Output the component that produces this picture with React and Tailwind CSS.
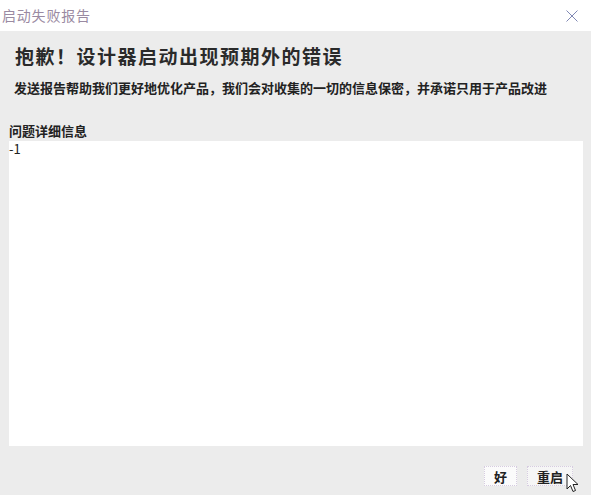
const cjk = { fontFamily: '"Noto Sans CJK SC", "Noto Sans", sans-serif' };

const Cursor = () => (
  <svg width="14" height="20" viewBox="0 0 14 20" className="absolute left-[566px] top-[473px]">
    <path
      d="M1 1 L1 16 L4.5 12.5 L7 18.5 L9.5 17.5 L7 11.5 L12 11.5 Z"
      fill="#fff"
      stroke="#222"
      strokeWidth="1"
      strokeLinejoin="round"
    />
  </svg>
);

export default function App() {
  return (
    <div className="relative w-[591px] h-[495px] flex flex-col bg-[#ececec] overflow-hidden" style={cjk}>
      <div className="h-[31px] bg-white flex items-center justify-between pl-[2px] pr-[13px]">
        <span className="text-[14px] tracking-[0.8px] text-[#9a8aa2]">启动失败报告</span>
        <svg width="12" height="12" viewBox="0 0 12 12">
          <path d="M0.5 0.5 L11.5 11.5 M11.5 0.5 L0.5 11.5" stroke="#8088b4" strokeWidth="1" />
        </svg>
      </div>

      <div className="flex-1 flex flex-col">
        <h1 className="pt-[11px] pl-[15px] text-[19px] leading-[28px] tracking-[1.5px] font-semibold text-[#2a2a2a]">
          抱歉！设计器启动出现预期外的错误
        </h1>
        <p className="mt-[9px] pl-[14px] text-[13px] leading-[18px] font-bold text-[#222]">
          发送报告帮助我们更好地优化产品，我们会对收集的一切的信息保密，并承诺只用于产品改进
        </p>
        <div className="mt-[25px] pl-[9px] text-[13px] leading-[18px] font-bold text-[#222]">问题详细信息</div>
        <div className="mt-[1px] ml-[9px] w-[574px] h-[305px] bg-white text-[13px] leading-[16px] text-[#222]">
          -1
        </div>
        <div className="mt-[20px] flex justify-end gap-[10px] pr-[18px]">
          <button className="w-[33px] h-[20px] bg-[#fbfbfb] border border-dotted border-[#d6cce0] text-[13px] font-bold text-[#222] leading-none">
            好
          </button>
          <button className="w-[46px] h-[20px] bg-[#f6f6f6] border border-dotted border-[#d6cce0] text-[13px] font-bold text-[#222] leading-none">
            重启
          </button>
        </div>
      </div>
      <Cursor />
    </div>
  );
}
